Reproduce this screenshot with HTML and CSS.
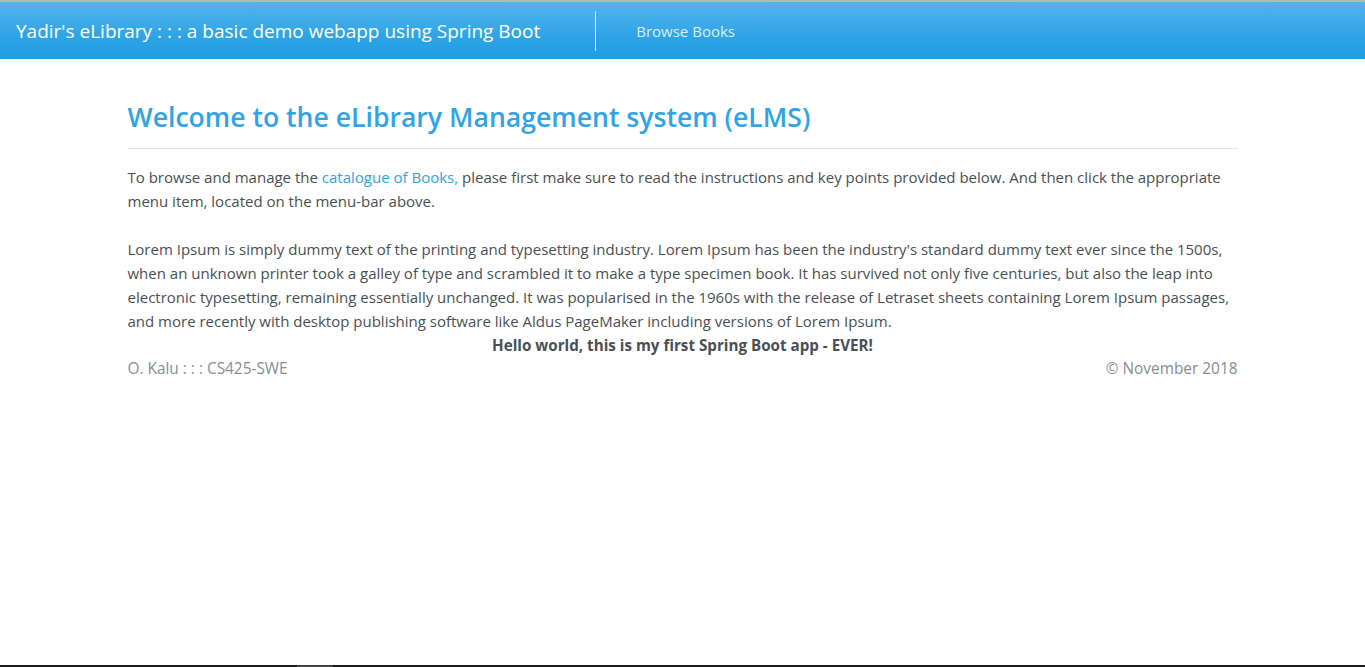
FILE: index.html
```html
<!DOCTYPE html>
<html lang="en">
<head>
<meta charset="utf-8">
<title>eLibrary</title>
<link rel="stylesheet" href="styles.css">
</head>
<body>
<nav class="navbar">
  <a class="brand" href="#">Yadir's eLibrary : : : a basic demo webapp using Spring Boot</a>
  <span class="divider"></span>
  <a class="nav-link" href="#">Browse Books</a>
</nav>
<main class="container">
  <h2 class="title">Welcome to the eLibrary Management system (eLMS)</h2>
  <hr class="rule">
  <p class="para">To browse and manage the <a class="link" href="#">catalogue of Books,</a> please first make sure to read the instructions and key points provided below. And then click the appropriate<br>menu item, located on the menu-bar above.</p>
  <p class="para">Lorem Ipsum is simply dummy text of the printing and typesetting industry. Lorem Ipsum has been the industry's standard dummy text ever since the 1500s,<br>when an unknown printer took a galley of type and scrambled it to make a type specimen book. It has survived not only five centuries, but also the leap into<br>electronic typesetting, remaining essentially unchanged. It was popularised in the 1960s with the release of Letraset sheets containing Lorem Ipsum passages,<br>and more recently with desktop publishing software like Aldus PageMaker including versions of Lorem Ipsum.</p>
  <p class="hello">Hello world, this is my first Spring Boot app - EVER!</p>
  <footer class="footer">
    <span>O. Kalu : : : CS425-SWE</span>
    <span>© November 2018</span>
  </footer>
</main>
<div class="bottom-bar"><span class="thumb"></span></div>
</body>
</html>
```
FILE: styles.css
```css
html, body {
  margin: 0;
  padding: 0;
}
body {
  font-family: "Open Sans", "Noto Sans", sans-serif;
  font-size: 15px;
  line-height: 24px;
  color: #495057;
  background: #fff;
}
.navbar {
  display: flex;
  align-items: center;
  height: 57px;
  border-top: 2px solid #b8b8b8;
  background: linear-gradient(#54b4eb, #2fa4e7 60%, #1d9ce5);
  padding: 0 16px;
}
.brand {
  color: #fff;
  text-decoration: none;
  font-size: 19px;
  line-height: 30px;
  white-space: nowrap;
}
.divider {
  width: 1px;
  height: 40px;
  background: #fff;
  margin-left: 55px;
  margin-right: 40px;
}
.nav-link {
  color: #dcedfb;
  text-decoration: none;
  font-size: 15px;
}
.container {
  width: 1110px;
  margin: 0 auto;
  padding-top: 40px;
}
.title {
  margin: 0;
  font-size: 26.6px;
  line-height: 36px;
  font-weight: 600;
  color: #2fa4e7;
}
.rule {
  border: 0;
  border-top: 1px solid #e5e5e5;
  margin: 13px 0 16px;
}
.para {
  margin: 0 0 24px;
  white-space: nowrap;
}
.link {
  color: #2fa4e7;
  text-decoration: none;
}
.hello {
  margin: -24px 0 0;
  text-align: center;
  font-weight: 700;
  font-size: 15.2px;
}
.footer {
  display: flex;
  justify-content: space-between;
  color: #868e96;
  font-size: 15.4px;
}
.bottom-bar {
  position: fixed;
  left: 0;
  right: 0;
  bottom: 0;
  height: 2px;
  background: #1a1a1a;
}
.thumb {
  display: block;
  margin-left: 297px;
  width: 36px;
  height: 2px;
  background: #444;
}
```
